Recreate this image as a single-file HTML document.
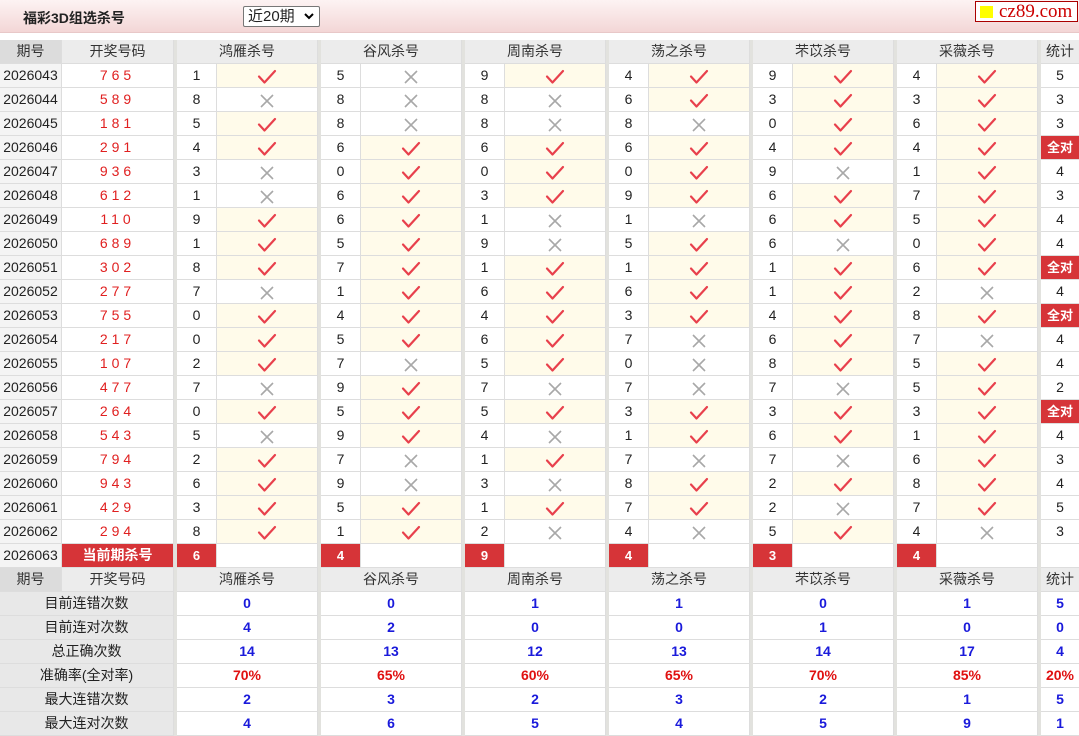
<!DOCTYPE html>
<html><head><meta charset="utf-8">
<style>
*{box-sizing:border-box;margin:0;padding:0}
body{width:1079px;height:735px;overflow:hidden;background:#fff;font-family:"Liberation Sans","Noto Sans CJK SC",sans-serif;font-size:14px;color:#222;position:relative}
.top{position:absolute;left:0;top:0;width:1079px;height:33px;background:linear-gradient(#fdf3f3,#f3d6d6);border-bottom:1px solid #e8c8c8}
.title{position:absolute;left:23px;top:8px;font-weight:bold;font-size:14px;color:#222}
.sel{position:absolute;left:243px;top:6px;width:77px;height:21px;border:1px solid #777;background:#fff;border-radius:2px;font-size:15px;padding-left:4px;line-height:19px}
.sel svg{position:absolute;right:5px;top:6px}
.logo{position:absolute;left:975px;top:1px;width:103px;height:21px;border:1px solid #a00;background:#fff;color:#c00;font-family:"Liberation Serif",serif;font-size:19px;line-height:19px;padding-left:23px}
.logo i{position:absolute;left:4px;top:4px;width:13px;height:12px;background:#ff0}
.tb{position:absolute;left:0;top:40px;width:1079px}
.r{display:flex;height:24px}
.r>div{height:24px;border-bottom:1px solid #ddd;border-right:1px solid #ddd;text-align:center;line-height:23px}
.a{width:62px;background:#f4f4f4}
.b{width:112px;color:#e02020;letter-spacing:4px}
.s{width:3px;background:#e2e2de;border-right:none!important;border-bottom:none!important}
.n{width:40px}
.i{width:101px}
.i.y{background:#fffbea}
.i svg{margin-top:5px}
.t{width:38px;border-right:none!important}
.g{width:141px}
.h>div{background:#ececec;color:#333}
.h .a{background:#dcdcdc}
.h .s{background:#e2e2de}
.q{background:#d63438!important;color:#fff;font-weight:bold;font-size:13px}
.L{width:174px;background:#e8e8e8}
.v{color:#1a1adb;font-weight:bold}
.p{color:#e01010;font-weight:bold}
</style></head><body>
<svg width="0" height="0" style="position:absolute"><defs>
<symbol id="ck" viewBox="0 0 20 16"><path d="M2 7.5 L7.5 13.5 L18 2" fill="none" stroke="#e8404c" stroke-width="2.2" stroke-linecap="round" stroke-linejoin="round"/></symbol>
<symbol id="cx" viewBox="0 0 16 16"><path d="M2 2 L14 14 M14 2 L2 14" fill="none" stroke="#a8a8a8" stroke-width="1.6"/></symbol>
</defs></svg>
<div class="top"><div class="title">福彩3D组选杀号</div>
<div class="sel">近20期<svg width="10" height="7" viewBox="0 0 10 7"><path d="M1 1 L5 5 L9 1" fill="none" stroke="#000" stroke-width="2"/></svg></div>
<div class="logo"><i></i>cz89.com</div></div>
<div class="tb" id="tb">
<div class="r h"><div class="a">期号</div><div class="b" style="letter-spacing:0;color:#333">开奖号码</div><div class="s"></div><div class="g">鸿雁杀号</div><div class="s"></div><div class="g">谷风杀号</div><div class="s"></div><div class="g">周南杀号</div><div class="s"></div><div class="g">荡之杀号</div><div class="s"></div><div class="g">芣苡杀号</div><div class="s"></div><div class="g">采薇杀号</div><div class="s"></div><div class="t">统计</div></div>
<div class="r"><div class="a">2026043</div><div class="b">765</div><div class="s"></div><div class="n">1</div><div class="i y"><svg width="20" height="16"><use href="#ck"/></svg></div><div class="s"></div><div class="n">5</div><div class="i"><svg width="16" height="16"><use href="#cx"/></svg></div><div class="s"></div><div class="n">9</div><div class="i y"><svg width="20" height="16"><use href="#ck"/></svg></div><div class="s"></div><div class="n">4</div><div class="i y"><svg width="20" height="16"><use href="#ck"/></svg></div><div class="s"></div><div class="n">9</div><div class="i y"><svg width="20" height="16"><use href="#ck"/></svg></div><div class="s"></div><div class="n">4</div><div class="i y"><svg width="20" height="16"><use href="#ck"/></svg></div><div class="s"></div><div class="t">5</div></div>
<div class="r"><div class="a">2026044</div><div class="b">589</div><div class="s"></div><div class="n">8</div><div class="i"><svg width="16" height="16"><use href="#cx"/></svg></div><div class="s"></div><div class="n">8</div><div class="i"><svg width="16" height="16"><use href="#cx"/></svg></div><div class="s"></div><div class="n">8</div><div class="i"><svg width="16" height="16"><use href="#cx"/></svg></div><div class="s"></div><div class="n">6</div><div class="i y"><svg width="20" height="16"><use href="#ck"/></svg></div><div class="s"></div><div class="n">3</div><div class="i y"><svg width="20" height="16"><use href="#ck"/></svg></div><div class="s"></div><div class="n">3</div><div class="i y"><svg width="20" height="16"><use href="#ck"/></svg></div><div class="s"></div><div class="t">3</div></div>
<div class="r"><div class="a">2026045</div><div class="b">181</div><div class="s"></div><div class="n">5</div><div class="i y"><svg width="20" height="16"><use href="#ck"/></svg></div><div class="s"></div><div class="n">8</div><div class="i"><svg width="16" height="16"><use href="#cx"/></svg></div><div class="s"></div><div class="n">8</div><div class="i"><svg width="16" height="16"><use href="#cx"/></svg></div><div class="s"></div><div class="n">8</div><div class="i"><svg width="16" height="16"><use href="#cx"/></svg></div><div class="s"></div><div class="n">0</div><div class="i y"><svg width="20" height="16"><use href="#ck"/></svg></div><div class="s"></div><div class="n">6</div><div class="i y"><svg width="20" height="16"><use href="#ck"/></svg></div><div class="s"></div><div class="t">3</div></div>
<div class="r"><div class="a">2026046</div><div class="b">291</div><div class="s"></div><div class="n">4</div><div class="i y"><svg width="20" height="16"><use href="#ck"/></svg></div><div class="s"></div><div class="n">6</div><div class="i y"><svg width="20" height="16"><use href="#ck"/></svg></div><div class="s"></div><div class="n">6</div><div class="i y"><svg width="20" height="16"><use href="#ck"/></svg></div><div class="s"></div><div class="n">6</div><div class="i y"><svg width="20" height="16"><use href="#ck"/></svg></div><div class="s"></div><div class="n">4</div><div class="i y"><svg width="20" height="16"><use href="#ck"/></svg></div><div class="s"></div><div class="n">4</div><div class="i y"><svg width="20" height="16"><use href="#ck"/></svg></div><div class="s"></div><div class="t q">全对</div></div>
<div class="r"><div class="a">2026047</div><div class="b">936</div><div class="s"></div><div class="n">3</div><div class="i"><svg width="16" height="16"><use href="#cx"/></svg></div><div class="s"></div><div class="n">0</div><div class="i y"><svg width="20" height="16"><use href="#ck"/></svg></div><div class="s"></div><div class="n">0</div><div class="i y"><svg width="20" height="16"><use href="#ck"/></svg></div><div class="s"></div><div class="n">0</div><div class="i y"><svg width="20" height="16"><use href="#ck"/></svg></div><div class="s"></div><div class="n">9</div><div class="i"><svg width="16" height="16"><use href="#cx"/></svg></div><div class="s"></div><div class="n">1</div><div class="i y"><svg width="20" height="16"><use href="#ck"/></svg></div><div class="s"></div><div class="t">4</div></div>
<div class="r"><div class="a">2026048</div><div class="b">612</div><div class="s"></div><div class="n">1</div><div class="i"><svg width="16" height="16"><use href="#cx"/></svg></div><div class="s"></div><div class="n">6</div><div class="i y"><svg width="20" height="16"><use href="#ck"/></svg></div><div class="s"></div><div class="n">3</div><div class="i y"><svg width="20" height="16"><use href="#ck"/></svg></div><div class="s"></div><div class="n">9</div><div class="i y"><svg width="20" height="16"><use href="#ck"/></svg></div><div class="s"></div><div class="n">6</div><div class="i y"><svg width="20" height="16"><use href="#ck"/></svg></div><div class="s"></div><div class="n">7</div><div class="i y"><svg width="20" height="16"><use href="#ck"/></svg></div><div class="s"></div><div class="t">3</div></div>
<div class="r"><div class="a">2026049</div><div class="b">110</div><div class="s"></div><div class="n">9</div><div class="i y"><svg width="20" height="16"><use href="#ck"/></svg></div><div class="s"></div><div class="n">6</div><div class="i y"><svg width="20" height="16"><use href="#ck"/></svg></div><div class="s"></div><div class="n">1</div><div class="i"><svg width="16" height="16"><use href="#cx"/></svg></div><div class="s"></div><div class="n">1</div><div class="i"><svg width="16" height="16"><use href="#cx"/></svg></div><div class="s"></div><div class="n">6</div><div class="i y"><svg width="20" height="16"><use href="#ck"/></svg></div><div class="s"></div><div class="n">5</div><div class="i y"><svg width="20" height="16"><use href="#ck"/></svg></div><div class="s"></div><div class="t">4</div></div>
<div class="r"><div class="a">2026050</div><div class="b">689</div><div class="s"></div><div class="n">1</div><div class="i y"><svg width="20" height="16"><use href="#ck"/></svg></div><div class="s"></div><div class="n">5</div><div class="i y"><svg width="20" height="16"><use href="#ck"/></svg></div><div class="s"></div><div class="n">9</div><div class="i"><svg width="16" height="16"><use href="#cx"/></svg></div><div class="s"></div><div class="n">5</div><div class="i y"><svg width="20" height="16"><use href="#ck"/></svg></div><div class="s"></div><div class="n">6</div><div class="i"><svg width="16" height="16"><use href="#cx"/></svg></div><div class="s"></div><div class="n">0</div><div class="i y"><svg width="20" height="16"><use href="#ck"/></svg></div><div class="s"></div><div class="t">4</div></div>
<div class="r"><div class="a">2026051</div><div class="b">302</div><div class="s"></div><div class="n">8</div><div class="i y"><svg width="20" height="16"><use href="#ck"/></svg></div><div class="s"></div><div class="n">7</div><div class="i y"><svg width="20" height="16"><use href="#ck"/></svg></div><div class="s"></div><div class="n">1</div><div class="i y"><svg width="20" height="16"><use href="#ck"/></svg></div><div class="s"></div><div class="n">1</div><div class="i y"><svg width="20" height="16"><use href="#ck"/></svg></div><div class="s"></div><div class="n">1</div><div class="i y"><svg width="20" height="16"><use href="#ck"/></svg></div><div class="s"></div><div class="n">6</div><div class="i y"><svg width="20" height="16"><use href="#ck"/></svg></div><div class="s"></div><div class="t q">全对</div></div>
<div class="r"><div class="a">2026052</div><div class="b">277</div><div class="s"></div><div class="n">7</div><div class="i"><svg width="16" height="16"><use href="#cx"/></svg></div><div class="s"></div><div class="n">1</div><div class="i y"><svg width="20" height="16"><use href="#ck"/></svg></div><div class="s"></div><div class="n">6</div><div class="i y"><svg width="20" height="16"><use href="#ck"/></svg></div><div class="s"></div><div class="n">6</div><div class="i y"><svg width="20" height="16"><use href="#ck"/></svg></div><div class="s"></div><div class="n">1</div><div class="i y"><svg width="20" height="16"><use href="#ck"/></svg></div><div class="s"></div><div class="n">2</div><div class="i"><svg width="16" height="16"><use href="#cx"/></svg></div><div class="s"></div><div class="t">4</div></div>
<div class="r"><div class="a">2026053</div><div class="b">755</div><div class="s"></div><div class="n">0</div><div class="i y"><svg width="20" height="16"><use href="#ck"/></svg></div><div class="s"></div><div class="n">4</div><div class="i y"><svg width="20" height="16"><use href="#ck"/></svg></div><div class="s"></div><div class="n">4</div><div class="i y"><svg width="20" height="16"><use href="#ck"/></svg></div><div class="s"></div><div class="n">3</div><div class="i y"><svg width="20" height="16"><use href="#ck"/></svg></div><div class="s"></div><div class="n">4</div><div class="i y"><svg width="20" height="16"><use href="#ck"/></svg></div><div class="s"></div><div class="n">8</div><div class="i y"><svg width="20" height="16"><use href="#ck"/></svg></div><div class="s"></div><div class="t q">全对</div></div>
<div class="r"><div class="a">2026054</div><div class="b">217</div><div class="s"></div><div class="n">0</div><div class="i y"><svg width="20" height="16"><use href="#ck"/></svg></div><div class="s"></div><div class="n">5</div><div class="i y"><svg width="20" height="16"><use href="#ck"/></svg></div><div class="s"></div><div class="n">6</div><div class="i y"><svg width="20" height="16"><use href="#ck"/></svg></div><div class="s"></div><div class="n">7</div><div class="i"><svg width="16" height="16"><use href="#cx"/></svg></div><div class="s"></div><div class="n">6</div><div class="i y"><svg width="20" height="16"><use href="#ck"/></svg></div><div class="s"></div><div class="n">7</div><div class="i"><svg width="16" height="16"><use href="#cx"/></svg></div><div class="s"></div><div class="t">4</div></div>
<div class="r"><div class="a">2026055</div><div class="b">107</div><div class="s"></div><div class="n">2</div><div class="i y"><svg width="20" height="16"><use href="#ck"/></svg></div><div class="s"></div><div class="n">7</div><div class="i"><svg width="16" height="16"><use href="#cx"/></svg></div><div class="s"></div><div class="n">5</div><div class="i y"><svg width="20" height="16"><use href="#ck"/></svg></div><div class="s"></div><div class="n">0</div><div class="i"><svg width="16" height="16"><use href="#cx"/></svg></div><div class="s"></div><div class="n">8</div><div class="i y"><svg width="20" height="16"><use href="#ck"/></svg></div><div class="s"></div><div class="n">5</div><div class="i y"><svg width="20" height="16"><use href="#ck"/></svg></div><div class="s"></div><div class="t">4</div></div>
<div class="r"><div class="a">2026056</div><div class="b">477</div><div class="s"></div><div class="n">7</div><div class="i"><svg width="16" height="16"><use href="#cx"/></svg></div><div class="s"></div><div class="n">9</div><div class="i y"><svg width="20" height="16"><use href="#ck"/></svg></div><div class="s"></div><div class="n">7</div><div class="i"><svg width="16" height="16"><use href="#cx"/></svg></div><div class="s"></div><div class="n">7</div><div class="i"><svg width="16" height="16"><use href="#cx"/></svg></div><div class="s"></div><div class="n">7</div><div class="i"><svg width="16" height="16"><use href="#cx"/></svg></div><div class="s"></div><div class="n">5</div><div class="i y"><svg width="20" height="16"><use href="#ck"/></svg></div><div class="s"></div><div class="t">2</div></div>
<div class="r"><div class="a">2026057</div><div class="b">264</div><div class="s"></div><div class="n">0</div><div class="i y"><svg width="20" height="16"><use href="#ck"/></svg></div><div class="s"></div><div class="n">5</div><div class="i y"><svg width="20" height="16"><use href="#ck"/></svg></div><div class="s"></div><div class="n">5</div><div class="i y"><svg width="20" height="16"><use href="#ck"/></svg></div><div class="s"></div><div class="n">3</div><div class="i y"><svg width="20" height="16"><use href="#ck"/></svg></div><div class="s"></div><div class="n">3</div><div class="i y"><svg width="20" height="16"><use href="#ck"/></svg></div><div class="s"></div><div class="n">3</div><div class="i y"><svg width="20" height="16"><use href="#ck"/></svg></div><div class="s"></div><div class="t q">全对</div></div>
<div class="r"><div class="a">2026058</div><div class="b">543</div><div class="s"></div><div class="n">5</div><div class="i"><svg width="16" height="16"><use href="#cx"/></svg></div><div class="s"></div><div class="n">9</div><div class="i y"><svg width="20" height="16"><use href="#ck"/></svg></div><div class="s"></div><div class="n">4</div><div class="i"><svg width="16" height="16"><use href="#cx"/></svg></div><div class="s"></div><div class="n">1</div><div class="i y"><svg width="20" height="16"><use href="#ck"/></svg></div><div class="s"></div><div class="n">6</div><div class="i y"><svg width="20" height="16"><use href="#ck"/></svg></div><div class="s"></div><div class="n">1</div><div class="i y"><svg width="20" height="16"><use href="#ck"/></svg></div><div class="s"></div><div class="t">4</div></div>
<div class="r"><div class="a">2026059</div><div class="b">794</div><div class="s"></div><div class="n">2</div><div class="i y"><svg width="20" height="16"><use href="#ck"/></svg></div><div class="s"></div><div class="n">7</div><div class="i"><svg width="16" height="16"><use href="#cx"/></svg></div><div class="s"></div><div class="n">1</div><div class="i y"><svg width="20" height="16"><use href="#ck"/></svg></div><div class="s"></div><div class="n">7</div><div class="i"><svg width="16" height="16"><use href="#cx"/></svg></div><div class="s"></div><div class="n">7</div><div class="i"><svg width="16" height="16"><use href="#cx"/></svg></div><div class="s"></div><div class="n">6</div><div class="i y"><svg width="20" height="16"><use href="#ck"/></svg></div><div class="s"></div><div class="t">3</div></div>
<div class="r"><div class="a">2026060</div><div class="b">943</div><div class="s"></div><div class="n">6</div><div class="i y"><svg width="20" height="16"><use href="#ck"/></svg></div><div class="s"></div><div class="n">9</div><div class="i"><svg width="16" height="16"><use href="#cx"/></svg></div><div class="s"></div><div class="n">3</div><div class="i"><svg width="16" height="16"><use href="#cx"/></svg></div><div class="s"></div><div class="n">8</div><div class="i y"><svg width="20" height="16"><use href="#ck"/></svg></div><div class="s"></div><div class="n">2</div><div class="i y"><svg width="20" height="16"><use href="#ck"/></svg></div><div class="s"></div><div class="n">8</div><div class="i y"><svg width="20" height="16"><use href="#ck"/></svg></div><div class="s"></div><div class="t">4</div></div>
<div class="r"><div class="a">2026061</div><div class="b">429</div><div class="s"></div><div class="n">3</div><div class="i y"><svg width="20" height="16"><use href="#ck"/></svg></div><div class="s"></div><div class="n">5</div><div class="i y"><svg width="20" height="16"><use href="#ck"/></svg></div><div class="s"></div><div class="n">1</div><div class="i y"><svg width="20" height="16"><use href="#ck"/></svg></div><div class="s"></div><div class="n">7</div><div class="i y"><svg width="20" height="16"><use href="#ck"/></svg></div><div class="s"></div><div class="n">2</div><div class="i"><svg width="16" height="16"><use href="#cx"/></svg></div><div class="s"></div><div class="n">7</div><div class="i y"><svg width="20" height="16"><use href="#ck"/></svg></div><div class="s"></div><div class="t">5</div></div>
<div class="r"><div class="a">2026062</div><div class="b">294</div><div class="s"></div><div class="n">8</div><div class="i y"><svg width="20" height="16"><use href="#ck"/></svg></div><div class="s"></div><div class="n">1</div><div class="i y"><svg width="20" height="16"><use href="#ck"/></svg></div><div class="s"></div><div class="n">2</div><div class="i"><svg width="16" height="16"><use href="#cx"/></svg></div><div class="s"></div><div class="n">4</div><div class="i"><svg width="16" height="16"><use href="#cx"/></svg></div><div class="s"></div><div class="n">5</div><div class="i y"><svg width="20" height="16"><use href="#ck"/></svg></div><div class="s"></div><div class="n">4</div><div class="i"><svg width="16" height="16"><use href="#cx"/></svg></div><div class="s"></div><div class="t">3</div></div>
<div class="r"><div class="a">2026063</div><div class="b q" style="letter-spacing:0;font-size:14px">当前期杀号</div><div class="s"></div><div class="n q">6</div><div class="i"></div><div class="s"></div><div class="n q">4</div><div class="i"></div><div class="s"></div><div class="n q">9</div><div class="i"></div><div class="s"></div><div class="n q">4</div><div class="i"></div><div class="s"></div><div class="n q">3</div><div class="i"></div><div class="s"></div><div class="n q">4</div><div class="i"></div><div class="s"></div><div class="t"></div></div>
<div class="r h"><div class="a">期号</div><div class="b" style="letter-spacing:0;color:#333">开奖号码</div><div class="s"></div><div class="g">鸿雁杀号</div><div class="s"></div><div class="g">谷风杀号</div><div class="s"></div><div class="g">周南杀号</div><div class="s"></div><div class="g">荡之杀号</div><div class="s"></div><div class="g">芣苡杀号</div><div class="s"></div><div class="g">采薇杀号</div><div class="s"></div><div class="t">统计</div></div>
<div class="r"><div class="L">目前连错次数</div><div class="s"></div><div class="g v">0</div><div class="s"></div><div class="g v">0</div><div class="s"></div><div class="g v">1</div><div class="s"></div><div class="g v">1</div><div class="s"></div><div class="g v">0</div><div class="s"></div><div class="g v">1</div><div class="s"></div><div class="t v">5</div></div>
<div class="r"><div class="L">目前连对次数</div><div class="s"></div><div class="g v">4</div><div class="s"></div><div class="g v">2</div><div class="s"></div><div class="g v">0</div><div class="s"></div><div class="g v">0</div><div class="s"></div><div class="g v">1</div><div class="s"></div><div class="g v">0</div><div class="s"></div><div class="t v">0</div></div>
<div class="r"><div class="L">总正确次数</div><div class="s"></div><div class="g v">14</div><div class="s"></div><div class="g v">13</div><div class="s"></div><div class="g v">12</div><div class="s"></div><div class="g v">13</div><div class="s"></div><div class="g v">14</div><div class="s"></div><div class="g v">17</div><div class="s"></div><div class="t v">4</div></div>
<div class="r"><div class="L">准确率(全对率)</div><div class="s"></div><div class="g p">70%</div><div class="s"></div><div class="g p">65%</div><div class="s"></div><div class="g p">60%</div><div class="s"></div><div class="g p">65%</div><div class="s"></div><div class="g p">70%</div><div class="s"></div><div class="g p">85%</div><div class="s"></div><div class="t p">20%</div></div>
<div class="r"><div class="L">最大连错次数</div><div class="s"></div><div class="g v">2</div><div class="s"></div><div class="g v">3</div><div class="s"></div><div class="g v">2</div><div class="s"></div><div class="g v">3</div><div class="s"></div><div class="g v">2</div><div class="s"></div><div class="g v">1</div><div class="s"></div><div class="t v">5</div></div>
<div class="r"><div class="L">最大连对次数</div><div class="s"></div><div class="g v">4</div><div class="s"></div><div class="g v">6</div><div class="s"></div><div class="g v">5</div><div class="s"></div><div class="g v">4</div><div class="s"></div><div class="g v">5</div><div class="s"></div><div class="g v">9</div><div class="s"></div><div class="t v">1</div></div>
</div>
</body></html>
